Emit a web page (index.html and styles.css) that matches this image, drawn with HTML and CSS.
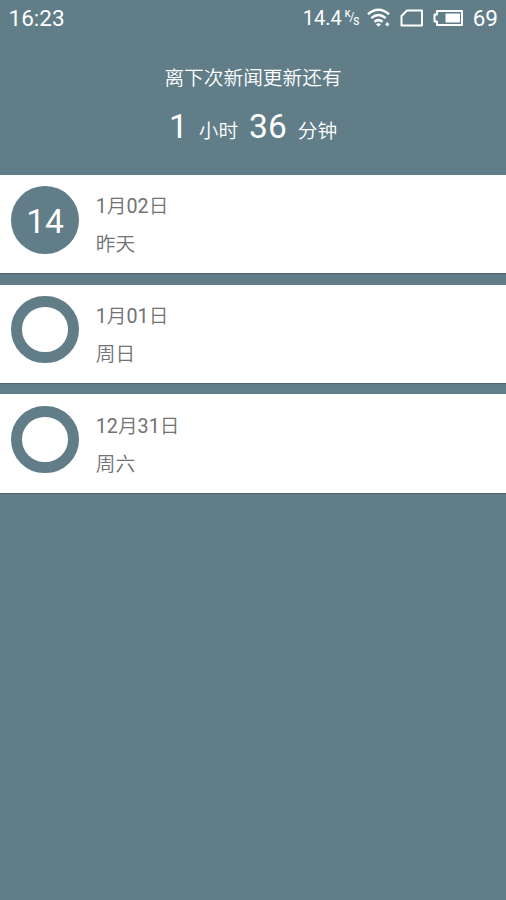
FILE: index.html
```html
<!DOCTYPE html>
<html lang="zh-CN">
<head>
<meta charset="utf-8">
<title>新闻</title>
<link rel="stylesheet" href="styles.css">
</head>
<body>
<header class="status">
  <span class="clock">16:23</span>
  <span class="speed">14.4</span>
  <span class="unit"><span class="unit-k">K</span><span class="unit-slash">/</span><span class="unit-s">S</span></span>
  <svg class="wifi" width="24" height="20" viewBox="0 0 24 20" fill="none" stroke="#fff" stroke-width="2.5">
    <path d="M1 6.3Q11.5-2.7 22 6.3M4.3 10.1Q11.5 3.9 18.7 10.1M7.5 13.7Q11.5 10.5 15.5 13.7"/>
    <path d="M9 16.2Q11.5 14.4 14 16.2L11.5 18.7ZM18 16h4.500l-2.250 2.500ZM18.500 16l1.750-2 1.750 2Z" fill="#fff" stroke="none"/>
  </svg>
  <svg class="sim" width="24" height="20" viewBox="0 0 24 20" fill="none" stroke="#fff" stroke-width="2">
    <path d="M7 2.500H22V17.500H1.500V8Z" stroke-linejoin="round"/>
  </svg>
  <svg class="battery" width="30" height="18" viewBox="0 0 30 18">
    <path d="M4 2H29V16H4V12.500H1.500V5.500H4Z" fill="none" stroke="#fff" stroke-width="2" stroke-linejoin="round"/>
    <path d="M12.500 4.500H27V13.500H12.500Z" fill="#fff"/>
  </svg>
  <span class="percent">69</span>
</header>
<section class="countdown">
  <p class="caption">离下次新闻更新还有</p>
  <p class="timer"><span class="num">1</span><span class="word">小时</span><span class="num">36</span><span class="word">分钟</span></p>
</section>
<main class="days">
  <article class="card">
    <div class="badge">14</div>
    <div class="info"><p><b>1</b>月<b>02</b>日</p><p>昨天</p></div>
  </article>
  <article class="card">
    <div class="badge ring"></div>
    <div class="info"><p><b>1</b>月<b>01</b>日</p><p>周日</p></div>
  </article>
  <article class="card">
    <div class="badge ring"></div>
    <div class="info"><p><b>12</b>月<b>31</b>日</p><p>周六</p></div>
  </article>
</main>
</body>
</html>
```

FILE: styles.css
```css
* { box-sizing: border-box; }
body {
  margin: 0;
  height: 900px;
  overflow: hidden;
  background: #607d88;
  color: #fff;
  font-family: Roboto, "Noto Sans CJK SC", sans-serif;
}
p { margin: 0; }
.status {
  display: flex;
  align-items: center;
  height: 36px;
  padding: 0 8px 0 8.500px;
}
.clock { font-size: 22.500px; margin-right: auto; }
.speed { font-size: 20px; }
.unit {
  display: flex;
  width: 15px;
  height: 18px;
  margin-left: 3px;
  line-height: 10px;
}
.unit-k { font-size: 9px; font-weight: 500; }
.unit-slash { font-size: 12px; margin-top: 3px; margin-left: -1px; }
.unit-s { font-size: 10px; margin-top: 8px; margin-left: -1px; font-weight: 500; }
.wifi { margin-left: 7px; }
.sim { margin-left: 9px; }
.battery { margin-left: 9px; }
.percent { font-size: 22.500px; margin-left: 10px; }
.countdown {
  height: 139px;
  padding-top: 29px;
  text-align: center;
  font-weight: 350;
}
.caption { font-size: 19.700px; line-height: 28px; }
.timer {
  display: flex;
  justify-content: center;
  align-items: baseline;
  margin-top: 13px;
  line-height: 42px;
}
.num { font-size: 33.500px; font-weight: 400; }
.word { font-size: 19.700px; margin: 0 11px; }
.word:last-child { margin-right: 0; }
.days {
  display: flex;
  flex-direction: column;
  gap: 11.250px;
}
.card {
  display: flex;
  height: 98.400px;
  padding: 11.250px;
  background: #fff;
  box-shadow: 0 1px 1px rgba(0, 0, 0, 0.18);
}
.badge {
  width: 67.500px;
  height: 67.500px;
  border-radius: 50%;
  background: #607d88;
  font-size: 33.500px;
  line-height: 71px;
  text-align: center;
}
.ring {
  border: 11.250px solid #607d88;
  background: #fff;
}
.info {
  margin-left: 17px;
  color: #737373;
  font-size: 19.700px;
  font-weight: 350;
  line-height: 38px;
}
.info b { font-weight: 400; }
.info p:first-child { margin-top: 2px; }
```
